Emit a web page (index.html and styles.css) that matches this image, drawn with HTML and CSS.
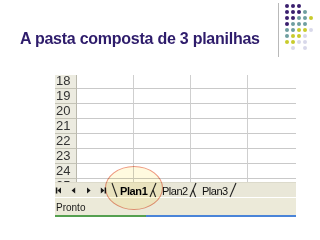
FILE: index.html
```html
<!DOCTYPE html>
<html>
<head>
<meta charset="utf-8">
<link rel="stylesheet" href="styles.css">
</head>
<body>
<div class="slide">
  <div class="header">
    <h1 class="title">A pasta composta de 3 planilhas</h1>
    <div class="deco">
      <div class="vline"></div>
      <div class="dots">
        <i class="p"></i><i class="p"></i><i class="p"></i><i></i><i></i>
        <i class="p"></i><i class="p"></i><i class="p"></i><i class="t"></i><i></i>
        <i class="p"></i><i class="p"></i><i class="t"></i><i class="t"></i><i class="y"></i>
        <i class="p"></i><i class="t"></i><i class="t"></i><i class="t"></i><i></i>
        <i class="t"></i><i class="t"></i><i class="y"></i><i class="y"></i><i class="l"></i>
        <i class="t"></i><i class="y"></i><i class="y"></i><i class="l"></i><i></i>
        <i class="y"></i><i class="y"></i><i class="l"></i><i class="l"></i><i></i>
        <i></i><i class="l"></i><i></i><i class="l"></i><i></i>
      </div>
    </div>
  </div>

  <div class="excel">
    <div class="grid">
      <div class="row"><span class="rh">18</span><span></span><span></span><span></span><span></span></div>
      <div class="row"><span class="rh">19</span><span></span><span></span><span></span><span></span></div>
      <div class="row"><span class="rh">20</span><span></span><span></span><span></span><span></span></div>
      <div class="row"><span class="rh">21</span><span></span><span></span><span></span><span></span></div>
      <div class="row"><span class="rh">22</span><span></span><span></span><span></span><span></span></div>
      <div class="row"><span class="rh">23</span><span></span><span></span><span></span><span></span></div>
      <div class="row"><span class="rh">24</span><span></span><span></span><span></span><span></span></div>
      <div class="row"><span class="rh">25</span><span></span><span></span><span></span><span></span></div>
    </div>
    <div class="tabbar">
      <svg class="nav" width="56" height="16" viewBox="0 0 56 16">
        <rect x="0.8" y="5.5" width="1.5" height="6" fill="#1a1a1a"/>
        <polygon points="6,5.5 6,11.5 2.4,8.5" fill="#1a1a1a"/>
        <polygon points="20.2,5.5 20.2,11.5 16.6,8.5" fill="#1a1a1a"/>
        <polygon points="32,5.5 32,11.5 35.6,8.5" fill="#1a1a1a"/>
        <polygon points="45.8,5.5 45.8,11.5 49.4,8.5" fill="#1a1a1a"/>
        <rect x="49.6" y="5.5" width="1.5" height="6" fill="#1a1a1a"/>
      </svg>
      <svg class="slant-l" width="8" height="16" viewBox="0 0 8 16">
        <line x1="1" y1="1" x2="6" y2="15" stroke="#222" stroke-width="1.1"/>
      </svg>
      <span class="tab active">Plan1</span>
      <svg class="slant" width="12" height="16" viewBox="0 0 12 16">
        <line x1="2" y1="15" x2="8" y2="1" stroke="#222" stroke-width="1.1"/>
        <line x1="5" y1="8" x2="7.6" y2="15" stroke="#222" stroke-width="1.1"/>
      </svg>
      <span class="tab">Plan2</span>
      <svg class="slant" width="12" height="16" viewBox="0 0 12 16">
        <line x1="2" y1="15" x2="8" y2="1" stroke="#222" stroke-width="1.1"/>
        <line x1="5" y1="8" x2="7.6" y2="15" stroke="#222" stroke-width="1.1"/>
      </svg>
      <span class="tab">Plan3</span>
      <svg class="slant" width="10" height="16" viewBox="0 0 10 16">
        <line x1="2" y1="15" x2="8" y2="1" stroke="#222" stroke-width="1.1"/>
      </svg>
    </div>
    <div class="status">Pronto</div>
    <div class="progress"><div class="green"></div><div class="blue"></div></div>
    <div class="highlight"></div>
  </div>
</div>
</body>
</html>
```

FILE: styles.css
```css
html, body {
  margin: 0;
  padding: 0;
  background: #ffffff;
}

.slide {
  width: 320px;
  height: 240px;
  overflow: hidden;
  font-family: "Liberation Sans", Arial, sans-serif;
  position: relative;
}

.header {
  display: flex;
  height: 60px;
}

.title {
  margin: 29px 0 0 20px;
  font-size: 16px;
  line-height: 20px;
  font-weight: bold;
  letter-spacing: -0.25px;
  color: #2e1c6b;
  white-space: nowrap;
}

.deco {
  margin-left: auto;
  margin-right: 7px;
  display: flex;
  padding-top: 3px;
}

.vline {
  width: 1px;
  height: 54px;
  background: #b9b9b9;
  margin-right: 6px;
}

.dots {
  margin-top: 1px;
  display: grid;
  grid-template-columns: repeat(5, 4px);
  grid-auto-rows: 4px;
  gap: 2px;
  align-self: flex-start;
}

.dots i {
  display: block;
  width: 4px;
  height: 4px;
  border-radius: 50%;
}

.dots .p { background: #3a1f6e; }
.dots .t { background: #6f9fa0; }
.dots .y { background: #c8cb2c; }
.dots .l { background: #d8d8ea; }

.excel {
  margin: 15px 0 0 55px;
  width: 241px;
}

.grid {
  height: 107px;
  overflow: hidden;
}

.row {
  display: grid;
  grid-template-columns: 22px 57px 57px 57px 48px;
  height: 15px;
}

.row:first-child {
  height: 14px;
}

.row span {
  box-sizing: border-box;
  border-bottom: 1px solid #c9c9c9;
  border-right: 1px solid #cfcfcf;
}

.row span:last-child {
  border-right: none;
}

.row .rh {
  background: #ecebe0;
  border-bottom: 1px solid #c4c3b6;
  border-right: 1px solid #b9b8ac;
  font-size: 13px;
  line-height: 14px;
  padding-left: 1px;
  color: #333333;
}

.row:first-child .rh {
  line-height: 12px;
}

.tabbar {
  display: flex;
  height: 16px;
  box-sizing: border-box;
  background: #e9e7d8;
  border-top: 1px solid #dcdacb;
  border-bottom: 1px solid #ffffff;
  align-items: flex-start;
}

.nav {
  flex: none;
  margin-top: -1px;
}

.slant-l, .slant {
  flex: none;
  margin-top: -1px;
}

.tab {
  flex: none;
  width: 26px;
  font-size: 11px;
  line-height: 14px;
  padding-top: 1px;
  letter-spacing: -0.5px;
  color: #111111;
  white-space: nowrap;
}

.slant-l + .tab {
  margin-left: 1px;
}

.slant + .tab {
  margin-left: 2px;
}

.tab.active {
  width: 28px;
  font-weight: bold;
  letter-spacing: -0.4px;
  color: #000000;
}

.status {
  height: 17px;
  box-sizing: border-box;
  background: #ecead9;
  font-size: 10px;
  line-height: 13px;
  padding: 3px 0 0 1px;
  color: #1a1a1a;
}

.progress {
  display: flex;
  height: 2px;
}

.progress .green {
  width: 91px;
  background: #55a050;
}

.progress .blue {
  flex: 1;
  background: #4a84d8;
}

.highlight {
  position: absolute;
  left: 105px;
  top: 166px;
  width: 58px;
  height: 44px;
  box-sizing: border-box;
  border: 1px solid #ee9a80;
  border-radius: 50%;
  background: #fffadf;
  mix-blend-mode: multiply;
}
```
